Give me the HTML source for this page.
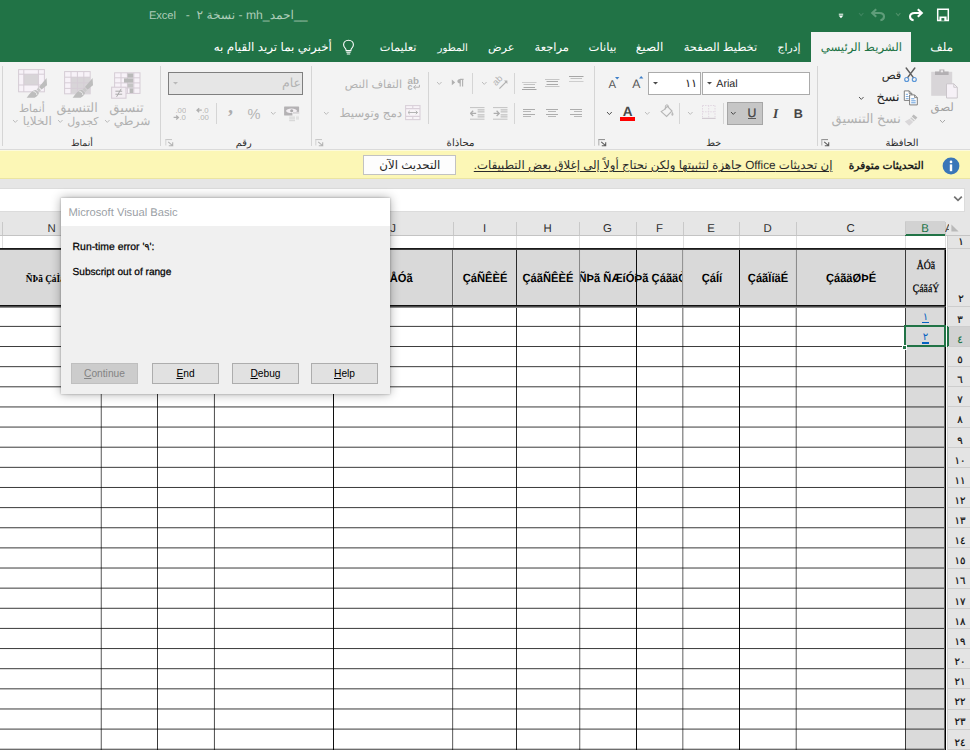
<!DOCTYPE html>
<html lang="ar">
<head>
<meta charset="utf-8">
<title>Excel</title>
<style>
*{box-sizing:border-box;margin:0;padding:0}
html,body{width:970px;height:750px;overflow:hidden;background:#e6e6e6}
body{font-family:"Liberation Sans",sans-serif;font-size:12px;color:#262626;position:relative}
.abs,.t,.ic,.vs{position:absolute}
.t{white-space:nowrap;line-height:1;text-rendering:geometricPrecision}
.r{direction:rtl}
/* title + tabs */
#titlebar{position:absolute;left:0;top:0;width:970px;height:62px;background:#217346}
#title{left:149px;top:7px;font-size:12.2px;color:#aecdb9;direction:ltr;line-height:16px}
.tab{color:#fff;font-size:11.5px;top:39px;line-height:16px;direction:rtl}
#acttab{position:absolute;left:811px;top:32px;width:100px;height:31px;background:#f3f3f3}
/* ribbon */
#ribbon{position:absolute;left:0;top:62px;width:970px;height:88px;background:#f3f3f3;border-bottom:1px solid #dadada}
.vs{width:1px;background:#d5d5d5}
.gl{font-size:10.5px;color:#3a3a3a;top:137px;line-height:12px;direction:rtl}
.rl{font-size:11.5px;color:#262626;direction:rtl;line-height:14px}
.dim{color:#b3b3b3}
.box{position:absolute;background:#fff;border:1px solid #ababab}
/* message bar */
#msg{position:absolute;left:0;top:150px;width:970px;height:29px;background:#fcf7b6;border-top:1px solid #fdfbdc;border-bottom:1px solid #ebe5a2}
/* formula bar */
#fbar{position:absolute;left:0;top:188px;width:965px;height:24px;background:#fff;border:1px solid #dcdcdc;border-left:0}
/* sheet */
#sheet{position:absolute;left:0;top:220px;width:970px;height:530px;background:#fff;overflow:hidden}
.ch{position:absolute;top:0;height:15px;background:#e6e6e6;border-left:1px solid #c9c9c9;font-size:11.5px;color:#3b3b3b;text-align:center;line-height:16px}
.hc{position:absolute;top:29px;height:56px;background:#d9d9d9;font-weight:bold;font-size:11.5px;color:#000;text-align:center;line-height:56px;overflow:hidden;white-space:nowrap;display:flex;justify-content:center}
.hl,.vl{position:absolute;background:#000}
.rn{position:absolute;left:947px;width:23px;height:20px;font-family:"Liberation Serif",serif;font-size:11px;color:#1c1c1c;text-align:center;direction:ltr}
/* dialog */
#dlg{position:absolute;left:61px;top:198px;width:329px;height:196px;background:#f0f0f0;box-shadow:0 0 10px rgba(0,0,0,.33),0 0 2px rgba(0,0,0,.3)}
#dlgt{position:absolute;left:0;top:0;width:329px;height:28px;background:#fff}
.btn{position:absolute;top:165px;width:67px;height:21px;background:#e1e1e1;border:1px solid #adadad;font-size:10.2px;text-align:center;line-height:19px;color:#000}
</style>
</head>
<body>
<div id="titlebar"></div>
<div id="acttab"></div>
<div class="t" id="title"><span style="font-size:11.2px;letter-spacing:-0.1px;margin-right:3px">Excel</span> &nbsp;-&nbsp; نسخة ٢ - mh_احمد__</div>

<!-- TABS -->
<div class="t " style="left:791.7px;top:37px;width:300px;text-align:center;line-height:20px;font-size:11.92px;color:#fff;direction:rtl;">ملف</div>
<div class="t " style="left:711.4px;top:38px;width:300px;text-align:center;line-height:20px;font-size:11.66px;color:#217346;direction:rtl;">الشريط الرئيسي</div>
<div class="t " style="left:639.0px;top:38px;width:300px;text-align:center;line-height:20px;font-size:10.80px;color:#fff;direction:rtl;">إدراج</div>
<div class="t " style="left:570.4px;top:38px;width:300px;text-align:center;line-height:20px;font-size:11.48px;color:#fff;direction:rtl;">تخطيط الصفحة</div>
<div class="t " style="left:499.6px;top:37px;width:300px;text-align:center;line-height:20px;font-size:12.02px;color:#fff;direction:rtl;">الصيغ</div>
<div class="t " style="left:452.5px;top:38px;width:300px;text-align:center;line-height:20px;font-size:11.60px;color:#fff;direction:rtl;">بيانات</div>
<div class="t " style="left:401.8px;top:38px;width:300px;text-align:center;line-height:20px;font-size:11.48px;color:#fff;direction:rtl;">مراجعة</div>
<div class="t " style="left:351.2px;top:38px;width:300px;text-align:center;line-height:20px;font-size:11.28px;color:#fff;direction:rtl;">عرض</div>
<div class="t " style="left:302.7px;top:39px;width:300px;text-align:center;line-height:20px;font-size:10.17px;color:#fff;direction:rtl;">المطور</div>
<div class="t " style="left:248.1px;top:38px;width:300px;text-align:center;line-height:20px;font-size:11.34px;color:#fff;direction:rtl;">تعليمات</div>
<div class="t " style="left:122.8px;top:37px;width:300px;text-align:center;line-height:20px;font-size:11.95px;color:#fff;direction:rtl;">أخبرني بما تريد القيام به</div>
<svg class="ic" style="left:341px;top:39px;" width="15" height="17" viewBox="0 0 15 17"><path d="M7.5 1.2 C4.4 1.2 2.6 3.4 2.6 5.7 C2.6 7.6 3.8 8.6 4.6 9.8 C5 10.4 5.1 11 5.1 11.6 H9.9 C9.9 11 10 10.4 10.4 9.8 C11.2 8.6 12.4 7.6 12.4 5.7 C12.4 3.4 10.6 1.2 7.5 1.2 Z" fill="none" stroke="#fff" stroke-width="1.1"/><path d="M5.3 13.2 H9.7 M5.8 15 H9.2" stroke="#fff" stroke-width="1.1" fill="none"/></svg>
<svg class="ic" style="left:936px;top:8px;" width="14" height="14" viewBox="0 0 14 14"><path d="M1.7 1.2 H12.3 V12.6 H1.7 Z" fill="none" stroke="#fff" stroke-width="1.5"/><rect x="3.4" y="8.5" width="7.2" height="4" fill="#fff"/><rect x="5.4" y="10.1" width="2.9" height="2.6" fill="#217346"/></svg>
<svg class="ic" style="left:908px;top:8px;" width="16" height="14" viewBox="0 0 16 14"><path d="M13 5 H6.6 C3.6 5 2 6.6 2 8.6 C2 10.6 3.4 12 5.6 12.2" fill="none" stroke="#fff" stroke-width="2.1"/><path d="M9.8 1.2 L13.8 5 L9.8 8.8" fill="none" stroke="#fff" stroke-width="2.1"/></svg>
<svg class="ic" style="left:870px;top:8px;" width="16" height="14" viewBox="0 0 16 14"><path d="M3 5 H9.4 C12.4 5 14 6.6 14 8.6 C14 10.6 12.6 12 10.4 12.2" fill="none" stroke="#5f9d7a" stroke-width="2.1"/><path d="M6.2 1.2 L2.2 5 L6.2 8.8" fill="none" stroke="#5f9d7a" stroke-width="2.1"/></svg>
<svg class="ic" style="left:894.8px;top:12.0px;" width="6.4" height="4.6" viewBox="0 0 6.4 4.6"><path d="M1 1 L3.2 3.6 L5.4 1" fill="none" stroke="#4f9069" stroke-width="1.1"/></svg>
<svg class="ic" style="left:857.5px;top:12.0px;" width="6.4" height="4.6" viewBox="0 0 6.4 4.6"><path d="M1 1 L3.2 3.6 L5.4 1" fill="none" stroke="#3f8560" stroke-width="1.1"/></svg>
<svg class="ic" style="left:838px;top:13px;" width="6" height="6" viewBox="0 0 6 6"><rect x="0.8" y="0.7" width="4.4" height="1" fill="#fff"/><path d="M0.6 2.6 H5.4 L3 5.2 Z" fill="#fff"/></svg>

<!-- RIBBON -->
<div id="ribbon"></div>
<div class="vs" style="left:2px;top:66px;height:80px"></div>
<div class="vs" style="left:160px;top:66px;height:80px"></div>
<div class="vs" style="left:311px;top:66px;height:80px"></div>
<div class="vs" style="left:594px;top:66px;height:80px"></div>
<div class="vs" style="left:817px;top:66px;height:80px"></div>
<svg class="ic" style="left:930px;top:68px;" width="29" height="32" viewBox="0 0 29 32"><rect x="1.2" y="3.8" width="21" height="24" fill="#d8d5d8"/><path d="M5 7 V3.6 H9.4 V1.4 H14.4 V3.6 H18.6 V7 Z" fill="#b3b0b3"/><rect x="10.7" y="2.3" width="2.4" height="2" fill="#ece9ec"/><path d="M16.5 15.8 H23.8 L27.3 19.3 V30 H16.5 Z" fill="#f6f1f7" stroke="#cbc6cb" stroke-width="1"/><path d="M23.8 15.8 V19.3 H27.3" fill="none" stroke="#cbc6cb" stroke-width="0.9"/></svg>
<div class="t " style="left:792.2px;top:98px;width:300px;text-align:center;line-height:20px;font-size:11.67px;color:#a2a2a2;direction:rtl;">لصق</div>
<svg class="ic" style="left:938.5px;top:118.9px;" width="7" height="4.6" viewBox="0 0 7 4.6"><path d="M1 1 L3.5 3.6 L6 1" fill="none" stroke="#a8a8a8" stroke-width="1"/></svg>
<svg class="ic" style="left:903px;top:67px;" width="15" height="16" viewBox="0 0 15 16"><path d="M3.2 1 L10.4 10.6 M11.8 1 L4.6 10.6" stroke="#5e5e5e" stroke-width="1.45" fill="none" stroke-linecap="round"/><circle cx="3.7" cy="12.5" r="2" fill="none" stroke="#5b97d8" stroke-width="1.15"/><circle cx="11.3" cy="12.5" r="2" fill="none" stroke="#5b97d8" stroke-width="1.15"/></svg>
<div class="t " style="left:741.5px;top:66px;width:300px;text-align:center;line-height:20px;font-size:11.57px;color:#262626;direction:rtl;">قص</div>
<svg class="ic" style="left:903px;top:90px;" width="16" height="16" viewBox="0 0 16 16"><path d="M1.3 0.9 H6.2 L8.8 3.5 V10.4 H1.3 Z" fill="#fff" stroke="#787878" stroke-width="0.95"/><path d="M6.2 0.9 V3.5 H8.8" fill="none" stroke="#787878" stroke-width="0.85"/><path d="M2.8 4.3 H5 M2.8 6.5 H5.6 M2.8 8.6 H5.6" stroke="#5b97d8" stroke-width="0.8"/><path d="M6.6 4.9 H11.6 L14.3 7.6 V14.9 H6.6 Z" fill="#fff" stroke="#787878" stroke-width="0.95"/><path d="M11.6 4.9 V7.6 H14.3" fill="none" stroke="#787878" stroke-width="0.85"/><path d="M8.2 8.8 H11.4 M8.2 10.8 H12.7 M8.2 12.8 H12.7" stroke="#5b97d8" stroke-width="0.95"/></svg>
<div class="t " style="left:738.0px;top:87px;width:300px;text-align:center;line-height:20px;font-size:12.60px;color:#262626;direction:rtl;">نسخ</div>
<svg class="ic" style="left:858.2px;top:96.2px;" width="6.6" height="4.4" viewBox="0 0 6.6 4.4"><path d="M1 1 L3.3 3.4 L5.6 1" fill="none" stroke="#555" stroke-width="1"/></svg>
<svg class="ic" style="left:904px;top:113px;" width="15" height="14" viewBox="0 0 15 14"><path d="M9.6 1.6 L13.4 4.6 L11.4 6.8 L7.8 3.6 Z" fill="#bcbcbc"/><path d="M7.2 4.2 L10.8 7.4 L9.8 8.4 L6.2 5.2 Z" fill="#cbcbcb"/><path d="M5.6 5.8 L9.2 9 L5.2 12.8 L0.8 8.6 Z" fill="#d9d7d9"/></svg>
<div class="t " style="left:716.2px;top:109px;width:300px;text-align:center;line-height:20px;font-size:13.06px;color:#b1b1b1;direction:rtl;">نسخ التنسيق</div>
<div class="t " style="left:752.0px;top:134px;width:300px;text-align:center;line-height:20px;font-size:9.81px;color:#2b2b2b;direction:rtl;">الحافظة</div>
<svg class="ic" style="left:821px;top:139px;" width="9" height="8" viewBox="0 0 9 8"><path d="M0.3 0.6 H7" stroke="#8c8c8c" stroke-width="1" fill="none"/><path d="M0.8 0.6 V6.6" stroke="#b6b6b6" stroke-width="1.2" fill="none"/><path d="M3.2 2.8 L7.3 6.3 M7.7 3.2 V6.7 H3.8" stroke="#5e5e5e" stroke-width="1.1" fill="none"/></svg>
<div class="box" style="left:702px;top:72px;width:108px;height:23px"></div>
<div class="box" style="left:648px;top:72px;width:53px;height:23px"></div>
<div class="t " style="left:577.0px;top:74px;width:300px;text-align:center;line-height:20px;font-size:10.69px;color:#262626;direction:ltr;">Arial</div>
<svg class="ic" style="left:706.5px;top:82.3px;" width="5" height="2.6" viewBox="0 0 5 2.6"><path d="M0 0 H5 L2.5 2.6 Z" fill="#4a4a4a"/></svg>
<div class="t " style="left:541.1px;top:74px;width:300px;text-align:center;line-height:20px;font-size:11.50px;color:#262626;direction:rtl;">١١</div>
<svg class="ic" style="left:652.9px;top:82.3px;" width="5" height="2.6" viewBox="0 0 5 2.6"><path d="M0 0 H5 L2.5 2.6 Z" fill="#4a4a4a"/></svg>
<div class="t " style="left:486.3px;top:74px;width:300px;text-align:center;line-height:20px;font-size:12.20px;color:#595959;direction:ltr;">A</div>
<svg class="ic" style="left:638.6px;top:75.8px;" width="5" height="3" viewBox="0 0 5 3"><path d="M0 2.6 L2.2 0 L4.4 2.6 Z" fill="#3f7fc8"/></svg>
<div class="t " style="left:462.3px;top:75px;width:300px;text-align:center;line-height:20px;font-size:11.30px;color:#595959;direction:ltr;">A</div>
<svg class="ic" style="left:614.6px;top:76.6px;" width="5" height="3" viewBox="0 0 5 3"><path d="M0 0 H4.4 L2.2 2.6 Z" fill="#3f7fc8"/></svg>
<div class="t " style="left:648.3px;top:104px;width:300px;text-align:center;line-height:20px;font-size:12.60px;color:#454545;font-weight:bold;direction:ltr;">B</div>
<div class="t " style="left:625.5px;top:104px;width:300px;text-align:center;line-height:20px;font-size:13.40px;color:#454545;font-weight:bold;direction:ltr;font-family:'Liberation Serif',serif;font-style:italic;">I</div>
<div class="abs" style="left:727px;top:102px;width:36px;height:23px;background:#c6c6c6;border:1px solid #a6a6a6"></div>
<div class="t " style="left:601.8px;top:103px;width:300px;text-align:center;line-height:20px;font-size:12.20px;color:#454545;direction:ltr;-webkit-text-stroke:0.3px #454545;">U</div>
<div class="abs" style="left:747.5px;top:118.2px;width:8.6px;height:1.1px;background:#5a5a5a"></div>
<svg class="ic" style="left:730.3000000000001px;top:111.39999999999999px;" width="6.6" height="4.4" viewBox="0 0 6.6 4.4"><path d="M1 1 L3.3 3.4 L5.6 1" fill="none" stroke="#4a4a4a" stroke-width="1"/></svg>
<div class="vs" style="left:723px;top:103px;height:21px"></div>
<svg class="ic" style="left:702px;top:105px;" width="14" height="15" viewBox="0 0 14 15"><path d="M0.5 0.5 H13 M0.5 6.8 H13 M0.5 0.5 V13 M6.7 0.5 V13 M13 0.5 V13" stroke="#e0d5e0" stroke-width="1" stroke-dasharray="1.4 1.2" fill="none"/><path d="M0 13.4 H13.6" stroke="#d2cbd2" stroke-width="1.2"/></svg>
<svg class="ic" style="left:687.0px;top:111.39999999999999px;" width="6.6" height="4.4" viewBox="0 0 6.6 4.4"><path d="M1 1 L3.3 3.4 L5.6 1" fill="none" stroke="#bdbdbd" stroke-width="1"/></svg>
<div class="vs" style="left:679px;top:103px;height:21px"></div>
<svg class="ic" style="left:659px;top:104px;" width="16" height="15" viewBox="0 0 16 15"><path d="M5.2 5.6 L8.4 2.4 L13 7 L7.6 12.4 L2.2 7.6 Z" fill="none" stroke="#b5b5b5" stroke-width="1.1"/><path d="M6.4 5.4 V2.2 C6.4 0.4 9.4 0.4 9.4 2.2 V3.4" fill="none" stroke="#b5b5b5" stroke-width="1"/><path d="M13.2 7.4 C14.6 9.4 14.8 10.6 14 11.4 C13.2 12 12.2 11.4 12.4 10.2 Z" fill="#b9b9b9"/></svg>
<svg class="ic" style="left:643.5px;top:111.39999999999999px;" width="6.6" height="4.4" viewBox="0 0 6.6 4.4"><path d="M1 1 L3.3 3.4 L5.6 1" fill="none" stroke="#bdbdbd" stroke-width="1"/></svg>
<div class="t " style="left:477.6px;top:102px;width:300px;text-align:center;line-height:20px;font-size:13.60px;color:#484848;font-weight:bold;direction:ltr;">A</div>
<div class="abs" style="left:619.8px;top:117px;width:15.4px;height:3.7px;background:#ff0000"></div>
<svg class="ic" style="left:605.6px;top:111.3px;" width="6.8" height="4.6" viewBox="0 0 6.8 4.6"><path d="M1 1 L3.4 3.6 L5.8 1" fill="none" stroke="#505050" stroke-width="1.0"/></svg>
<div class="t " style="left:563.8px;top:134px;width:300px;text-align:center;line-height:20px;font-size:9.50px;color:#2b2b2b;direction:rtl;">خط</div>
<svg class="ic" style="left:598px;top:139px;" width="9" height="8" viewBox="0 0 9 8"><path d="M0.3 0.6 H7" stroke="#8c8c8c" stroke-width="1" fill="none"/><path d="M0.8 0.6 V6.6" stroke="#b6b6b6" stroke-width="1.2" fill="none"/><path d="M3.2 2.8 L7.3 6.3 M7.7 3.2 V6.7 H3.8" stroke="#5e5e5e" stroke-width="1.1" fill="none"/></svg>
<svg class="ic" style="left:568.5px;top:76px;" width="15" height="7" viewBox="0 0 15 7"><path d="M0 0.5 H14.5" stroke="#a6a6a6" stroke-width="1"/><path d="M1.5 2.5 H13" stroke="#c2c2c2" stroke-width="1"/><path d="M0 5.5 H14.5" stroke="#cdcdcd" stroke-width="1"/></svg>
<svg class="ic" style="left:545px;top:79px;" width="15" height="9" viewBox="0 0 15 9"><path d="M0 0.5 H14.5" stroke="#c6c6c6" stroke-width="1"/><path d="M1.5 2.5 H13" stroke="#aaaaaa" stroke-width="1"/><path d="M1.5 5.5 H13" stroke="#aaaaaa" stroke-width="1"/><path d="M0 7.5 H14.5" stroke="#c6c6c6" stroke-width="1"/></svg>
<svg class="ic" style="left:522px;top:82px;" width="15" height="9" viewBox="0 0 15 9"><path d="M0 0.5 H14.5" stroke="#cdcdcd" stroke-width="1"/><path d="M1.5 2.5 H13" stroke="#c2c2c2" stroke-width="1"/><path d="M1.5 5.5 H13" stroke="#aaaaaa" stroke-width="1"/><path d="M0 7.5 H14.5" stroke="#a6a6a6" stroke-width="1"/></svg>
<div class="vs" style="left:514px;top:73px;height:21px"></div>
<svg class="ic" style="left:492px;top:75px;" width="17" height="15" viewBox="0 0 17 15"><text x="0" y="0" transform="translate(4,11.2) rotate(-45)" font-family="Liberation Sans,sans-serif" font-size="9.2" fill="#b1b1b1">ab</text><path d="M7.4 13.6 L14.6 6.4" stroke="#b1b1b1" stroke-width="1.2" fill="none"/><path d="M12 5.6 L15.4 5.6 L15.4 9 Z" fill="#b1b1b1"/></svg>
<svg class="ic" style="left:481.0px;top:81.1px;" width="6.6" height="4.4" viewBox="0 0 6.6 4.4"><path d="M1 1 L3.3 3.4 L5.6 1" fill="none" stroke="#bdbdbd" stroke-width="1"/></svg>
<div class="vs" style="left:472px;top:73px;height:21px"></div>
<svg class="ic" style="left:451px;top:78px;" width="14" height="10" viewBox="0 0 14 10"><path d="M0.8 1.6 L4.2 4.4 L0.8 7.2 Z" fill="#b0b0b0"/><path d="M9 1.4 H12.6 M9.2 1.4 V8.6 M11.6 1.4 V8.6" stroke="#b0b0b0" stroke-width="1.1" fill="none"/><path d="M9.2 1 C5.4 1 5.4 5.4 9.2 5.4 Z" fill="#b0b0b0"/></svg>
<svg class="ic" style="left:436.2px;top:81.1px;" width="6.6" height="4.4" viewBox="0 0 6.6 4.4"><path d="M1 1 L3.3 3.4 L5.6 1" fill="none" stroke="#bdbdbd" stroke-width="1"/></svg>
<div class="vs" style="left:428px;top:72px;height:52px"></div>
<svg class="ic" style="left:406.5px;top:76.5px;" width="14" height="14" viewBox="0 0 14 14"><text x="0.6" y="6.8" font-family="Liberation Sans,sans-serif" font-size="8.8" font-weight="bold" fill="#b1b1b1" textLength="11.4" lengthAdjust="spacingAndGlyphs">ab</text><text x="0.6" y="12.6" font-family="Liberation Sans,sans-serif" font-size="8.8" font-weight="bold" fill="#b1b1b1">c</text><path d="M12.4 7.8 V10.2 H6.8 M8.8 8.2 L6.6 10.2 L8.8 12.2" stroke="#b1b1b1" stroke-width="1" fill="none"/></svg>
<div class="t " style="left:223.4px;top:75px;width:300px;text-align:center;line-height:20px;font-size:11.20px;color:#b1b1b1;direction:rtl;">التفاف النص</div>
<svg class="ic" style="left:569.6px;top:109px;" width="13" height="9" viewBox="0 0 13 9"><path d="M0 0.5 H12" stroke="#adadad" stroke-width="1"/><path d="M4 2.5 H12" stroke="#b8b8b8" stroke-width="1"/><path d="M0 5.5 H12" stroke="#adadad" stroke-width="1"/><path d="M4 7.5 H12" stroke="#b8b8b8" stroke-width="1"/></svg>
<svg class="ic" style="left:546px;top:109px;" width="13" height="9" viewBox="0 0 13 9"><path d="M0.0 0.5 H12.0" stroke="#adadad" stroke-width="1"/><path d="M2.0 2.5 H10.0" stroke="#b8b8b8" stroke-width="1"/><path d="M0.0 5.5 H12.0" stroke="#adadad" stroke-width="1"/><path d="M2.0 7.5 H10.0" stroke="#b8b8b8" stroke-width="1"/></svg>
<svg class="ic" style="left:523.2px;top:109px;" width="13" height="9" viewBox="0 0 13 9"><path d="M0 0.5 H12" stroke="#adadad" stroke-width="1"/><path d="M0 2.5 H8" stroke="#b8b8b8" stroke-width="1"/><path d="M0 5.5 H12" stroke="#adadad" stroke-width="1"/><path d="M0 7.5 H8" stroke="#b8b8b8" stroke-width="1"/></svg>
<div class="vs" style="left:514px;top:103px;height:21px"></div>
<svg class="ic" style="left:493.2px;top:106.6px;" width="15" height="14" viewBox="0 0 15 14"><path d="M0 0.6 H14.5 M0 12.2 H14.5" stroke="#bcbcbc" stroke-width="0.9"/><path d="M7.6 2.9 H14.5 M7.6 4.9 H14.5 M7.6 7.9 H14.5 M7.6 9.9 H14.5" stroke="#b6b6b6" stroke-width="1"/><path d="M0.6 6.4 H6 M3.6 3.8 L6.2 6.4 L3.6 9" stroke="#adadad" stroke-width="1.3" fill="none"/></svg>
<svg class="ic" style="left:469.6px;top:106.6px;" width="15" height="14" viewBox="0 0 15 14"><path d="M0 0.6 H14.5 M0 12.2 H14.5" stroke="#bcbcbc" stroke-width="0.9"/><path d="M7.6 2.9 H14.5 M7.6 4.9 H14.5 M7.6 7.9 H14.5 M7.6 9.9 H14.5" stroke="#b6b6b6" stroke-width="1"/><path d="M6.2 6.4 H0.8 M3.2 3.8 L0.6 6.4 L3.2 9" stroke="#adadad" stroke-width="1.3" fill="none"/></svg>
<svg class="ic" style="left:405px;top:105px;" width="16" height="16" viewBox="0 0 16 16"><rect x="0.6" y="0.6" width="14.4" height="14" fill="#f8f4f8" stroke="#d9d0d9" stroke-width="1.1"/><path d="M0.6 3.6 H15 M0.6 11.4 H15 M7.8 0.6 V3.6 M7.8 11.4 V14.6" stroke="#d9d0d9" stroke-width="1.1"/><path d="M3 7.5 H12.6 M4.8 5.8 L3 7.5 L4.8 9.2 M10.8 5.8 L12.6 7.5 L10.8 9.2" stroke="#b4b4b4" stroke-width="1" fill="none"/></svg>
<div class="t " style="left:220.8px;top:103px;width:300px;text-align:center;line-height:20px;font-size:11.90px;color:#b1b1b1;direction:rtl;">دمج وتوسيط</div>
<svg class="ic" style="left:322.9px;top:111.2px;" width="6.6" height="4.4" viewBox="0 0 6.6 4.4"><path d="M1 1 L3.3 3.4 L5.6 1" fill="none" stroke="#bdbdbd" stroke-width="1"/></svg>
<div class="t " style="left:310.5px;top:134px;width:300px;text-align:center;line-height:20px;font-size:10.18px;color:#2b2b2b;direction:rtl;">محاذاة</div>
<svg class="ic" style="left:314.5px;top:139px;" width="9" height="8" viewBox="0 0 9 8"><path d="M0.3 0.6 H7" stroke="#c4c4c4" stroke-width="1" fill="none"/><path d="M0.8 0.6 V6.6" stroke="#d6d6d6" stroke-width="1.2" fill="none"/><path d="M3.2 2.8 L7.3 6.3 M7.7 3.2 V6.7 H3.8" stroke="#b4b4b4" stroke-width="1.1" fill="none"/></svg>
<div class="box" style="left:168px;top:72px;width:135px;height:23px;background:#e6e6e6;border-color:#7f7f7f"></div>
<div class="t " style="left:141.5px;top:73px;width:300px;text-align:center;line-height:20px;font-size:12.58px;color:#b3b3b3;direction:rtl;">عام</div>
<svg class="ic" style="left:172.5px;top:82.3px;" width="5" height="2.6" viewBox="0 0 5 2.6"><path d="M0 0 H5 L2.5 2.6 Z" fill="#b9b9b9"/></svg>
<svg class="ic" style="left:284px;top:105.5px;" width="16" height="16" viewBox="0 0 16 16"><rect x="0.1" y="0.5" width="15" height="9" rx="0.6" fill="#b4b2b4"/><ellipse cx="7.5" cy="4.8" rx="5.4" ry="2.3" fill="#f2eef2"/><circle cx="7.7" cy="4.8" r="1.55" fill="#aaa8aa"/><rect x="8.4" y="5.9" width="7.2" height="4" fill="#f3f3f3"/><path d="M9 6.9 H15.2" stroke="#d3d0d3" stroke-width="1.5"/><path d="M5.2 11.1 H11 M5.2 12.9 H11 M5.2 14.7 H11" stroke="#d9d9d9" stroke-width="1.2"/><path d="M12 11.1 H15 M12 12.8 H15" stroke="#dcdcdc" stroke-width="1.2"/></svg>
<svg class="ic" style="left:270.09999999999997px;top:111.0px;" width="6.6" height="4.4" viewBox="0 0 6.6 4.4"><path d="M1 1 L3.3 3.4 L5.6 1" fill="none" stroke="#bdbdbd" stroke-width="1"/></svg>
<div class="t " style="left:104.0px;top:105px;width:300px;text-align:center;line-height:20px;font-size:14.60px;color:#b3b3b3;direction:ltr;">%</div>
<div class="t " style="left:80.5px;top:97px;width:300px;text-align:center;line-height:20px;font-size:20.00px;color:#adadad;font-weight:bold;direction:ltr;font-family:'Liberation Serif',serif;">,</div>
<div class="vs" style="left:216px;top:103px;height:21px"></div>
<svg class="ic" style="left:196px;top:106.6px;" width="13" height="14" viewBox="0 0 13 14"><text x="6.2" y="6.2" font-family="Liberation Sans,sans-serif" font-size="7.8" fill="#b6b6b6">.0</text><text x="2" y="13.2" font-family="Liberation Sans,sans-serif" font-size="7.8" fill="#b6b6b6">.00</text><path d="M5.8 3.2 H1.2 M3.2 1.2 L1 3.2 L3.2 5.2" stroke="#b0b0b0" stroke-width="1.3" fill="none"/></svg>
<svg class="ic" style="left:172.6px;top:106.6px;" width="13" height="14" viewBox="0 0 13 14"><text x="2.4" y="6.2" font-family="Liberation Sans,sans-serif" font-size="7.8" fill="#b6b6b6">.00</text><text x="6.4" y="13.2" font-family="Liberation Sans,sans-serif" font-size="7.8" fill="#b6b6b6">.0</text><path d="M0.6 10.4 H5.2 M3.2 8.4 L5.4 10.4 L3.2 12.4" stroke="#b0b0b0" stroke-width="1.3" fill="none"/></svg>
<div class="t " style="left:93.7px;top:134px;width:300px;text-align:center;line-height:20px;font-size:9.78px;color:#2b2b2b;direction:rtl;">رقم</div>
<svg class="ic" style="left:164.5px;top:139px;" width="9" height="8" viewBox="0 0 9 8"><path d="M0.3 0.6 H7" stroke="#c4c4c4" stroke-width="1" fill="none"/><path d="M0.8 0.6 V6.6" stroke="#d6d6d6" stroke-width="1.2" fill="none"/><path d="M3.2 2.8 L7.3 6.3 M7.7 3.2 V6.7 H3.8" stroke="#b4b4b4" stroke-width="1.1" fill="none"/></svg>
<svg class="ic" style="left:111px;top:72px;" width="30" height="27" viewBox="0 0 30 27"><rect x="3.6" y="0.8" width="25.4" height="20.6" fill="#f7f2f8" stroke="#d6cdd6" stroke-width="1"/><path d="M3.6 5.8 H29 M3.6 10.9 H29 M3.6 16 H29 M10 0.8 V21.4 M16.4 0.8 V21.4 M22.8 0.8 V21.4" stroke="#d6cdd6" stroke-width="1"/><rect x="16.6" y="1.4" width="5.6" height="4.2" fill="#b9b9b9"/><rect x="13" y="6.4" width="9.2" height="4.2" fill="#b9b9b9"/><rect x="16.6" y="11.4" width="5.6" height="4.2" fill="#c4c4c4"/><rect x="18.6" y="16.4" width="3.6" height="4.6" fill="#b9b9b9"/><rect x="0.6" y="15.2" width="14.4" height="11" fill="#f3eef3" stroke="#d6cdd6" stroke-width="1.1"/><path d="M4.4 19.2 H11.2 M4.4 22.2 H11.2 M10.2 16.8 L5.6 24.8" stroke="#a9a9a9" stroke-width="1" fill="none"/></svg>
<div class="t " style="left:-23.5px;top:98px;width:300px;text-align:center;line-height:20px;font-size:13.19px;color:#b1b1b1;direction:rtl;">تنسيق</div>
<div class="t " style="left:-18.0px;top:111px;width:300px;text-align:center;line-height:20px;font-size:12.18px;color:#b1b1b1;direction:rtl;">شرطي</div>
<svg class="ic" style="left:103.7px;top:119.0px;" width="6.6" height="4.4" viewBox="0 0 6.6 4.4"><path d="M1 1 L3.3 3.4 L5.6 1" fill="none" stroke="#bdbdbd" stroke-width="1"/></svg>
<svg class="ic" style="left:63.5px;top:70.6px;" width="27" height="24" viewBox="0 0 27 24"><rect x="0.6" y="0.6" width="25.6" height="22.2" fill="#f7f2f8" stroke="#d6cdd6" stroke-width="1"/><rect x="7" y="6.2" width="19" height="16.4" fill="#d8d5d8"/><path d="M0.6 6.2 H26.2 M0.6 11.8 H26.2 M0.6 17.4 H26.2 M7 0.6 V22.8 M13.4 0.6 V22.8 M19.8 0.6 V22.8" stroke="#d6cdd6" stroke-width="1"/></svg>
<svg class="ic" style="left:71.6px;top:77px;" width="22" height="22" viewBox="0 0 22 22"><path d="M20.6 1 L21 8.2 L15.6 12.6 L13 10 Z" fill="#bdbdbd"/><path d="M12.4 10.6 L15 13.2 L13.2 15 L10.6 12.4 Z" fill="#c9c9c9"/><path d="M10 13 C6 13.4 3.6 17 0.6 20.8 H8.6 C11.6 19.4 13.2 17 12.8 15.6 Z" fill="#bdbdbd"/><path d="M7.4 14.6 C9.4 14.4 11 16 10.8 18" stroke="#f3f3f3" stroke-width="0.9" fill="none"/></svg>
<div class="t " style="left:-72.8px;top:98px;width:300px;text-align:center;line-height:20px;font-size:12.86px;color:#b1b1b1;direction:rtl;">التنسيق</div>
<div class="t " style="left:-67.2px;top:112px;width:300px;text-align:center;line-height:20px;font-size:10.99px;color:#b1b1b1;direction:rtl;">كجدول</div>
<svg class="ic" style="left:56.7px;top:119.0px;" width="6.6" height="4.4" viewBox="0 0 6.6 4.4"><path d="M1 1 L3.3 3.4 L5.6 1" fill="none" stroke="#bdbdbd" stroke-width="1"/></svg>
<svg class="ic" style="left:17.5px;top:68.5px;" width="27" height="24" viewBox="0 0 27 24"><rect x="0.6" y="0.6" width="25.8" height="22.2" fill="#f7f2f8" stroke="#d6cdd6" stroke-width="1"/><rect x="5.8" y="5.2" width="14.6" height="10.8" fill="#d8d5d8"/><path d="M0.6 5.2 H26.4 M0.6 16 H26.4 M5.8 0.6 V22.8 M20.4 0.6 V22.8" stroke="#d6cdd6" stroke-width="1"/></svg>
<svg class="ic" style="left:26px;top:77px;" width="22" height="22" viewBox="0 0 22 22"><path d="M20.6 1 L21 8.2 L15.6 12.6 L13 10 Z" fill="#bdbdbd"/><path d="M12.4 10.6 L15 13.2 L13.2 15 L10.6 12.4 Z" fill="#c9c9c9"/><path d="M10 13 C6 13.4 3.6 17 0.6 20.8 H8.6 C11.6 19.4 13.2 17 12.8 15.6 Z" fill="#bdbdbd"/><path d="M7.4 14.6 C9.4 14.4 11 16 10.8 18" stroke="#f3f3f3" stroke-width="0.9" fill="none"/></svg>
<div class="t " style="left:-118.2px;top:99px;width:300px;text-align:center;line-height:20px;font-size:10.94px;color:#b1b1b1;direction:rtl;">أنماط</div>
<div class="t " style="left:-112.7px;top:111px;width:300px;text-align:center;line-height:20px;font-size:12.01px;color:#b1b1b1;direction:rtl;">الخلايا</div>
<svg class="ic" style="left:12.399999999999999px;top:119.0px;" width="6.6" height="4.4" viewBox="0 0 6.6 4.4"><path d="M1 1 L3.3 3.4 L5.6 1" fill="none" stroke="#bdbdbd" stroke-width="1"/></svg>
<div class="t " style="left:-68.1px;top:133px;width:300px;text-align:center;line-height:20px;font-size:9.22px;color:#2b2b2b;direction:rtl;">أنماط</div>

<!-- MESSAGE BAR -->
<div id="msg"></div>

<!-- FORMULA BAR -->
<div id="fbar"></div>

<!-- SHEET -->
<svg class="ic" style="left:942px;top:156.5px;" width="18" height="18" viewBox="0 0 18 18"><circle cx="9" cy="9" r="8.4" fill="#3a76b8"/><circle cx="9" cy="4.9" r="1.35" fill="#fff"/><rect x="7.8" y="7.4" width="2.4" height="6.8" fill="#fff"/></svg>
<div class="t " style="left:736.2px;top:156px;width:300px;text-align:center;line-height:20px;font-size:10.60px;color:#1e1e1e;font-weight:bold;direction:rtl;">التحديثات متوفرة</div>
<div class="t " style="left:303.1px;top:156px;width:700px;text-align:center;line-height:20px;font-size:11.74px;color:#2a2a2a;direction:rtl;text-decoration:underline;text-underline-offset:2px;text-decoration-thickness:1px;">إن تحديثات Office جاهزة لتثبيتها ولكن نحتاج أولاً إلى إغلاق بعض التطبيقات.</div>
<div class="abs" style="left:363px;top:155px;width:93px;height:20px;background:#fdfdfd;border:1px solid #c2c2c2"></div>
<div class="t " style="left:259.8px;top:155px;width:300px;text-align:center;line-height:20px;font-size:11.82px;color:#262626;direction:rtl;">التحديث الآن</div>
<svg class="ic" style="left:952.5px;top:195px;" width="10" height="8" viewBox="0 0 10 8"><path d="M1.2 1.6 L5 5.4 L8.8 1.6" fill="none" stroke="#727272" stroke-width="1.7"/></svg>
<div class="abs" style="left:0;top:220px;width:970px;height:16px;background:#e6e6e6;border-bottom:1px solid #c4c4c4"></div>
<div class="abs" style="left:905px;top:221px;width:40px;height:15px;background:#d2d2d2;border-bottom:2px solid #217346"></div>
<div class="abs" style="left:2px;top:222px;width:1px;height:13px;background:#c9c9c9"></div>
<div class="t " style="left:-98.5px;top:219px;width:300px;text-align:center;line-height:20px;font-size:11.40px;color:#303030;direction:ltr;">N</div>
<div class="abs" style="left:101px;top:222px;width:1px;height:13px;background:#c9c9c9"></div>
<div class="t " style="left:-21.0px;top:219px;width:300px;text-align:center;line-height:20px;font-size:11.40px;color:#303030;direction:ltr;">M</div>
<div class="abs" style="left:157px;top:222px;width:1px;height:13px;background:#c9c9c9"></div>
<div class="t " style="left:35.5px;top:219px;width:300px;text-align:center;line-height:20px;font-size:11.40px;color:#303030;direction:ltr;">L</div>
<div class="abs" style="left:214px;top:222px;width:1px;height:13px;background:#c9c9c9"></div>
<div class="t " style="left:123.5px;top:219px;width:300px;text-align:center;line-height:20px;font-size:11.40px;color:#303030;direction:ltr;">K</div>
<div class="abs" style="left:333px;top:222px;width:1px;height:13px;background:#c9c9c9"></div>
<div class="t " style="left:243.0px;top:219px;width:300px;text-align:center;line-height:20px;font-size:11.40px;color:#303030;direction:ltr;">J</div>
<div class="abs" style="left:453px;top:222px;width:1px;height:13px;background:#c9c9c9"></div>
<div class="t " style="left:334.5px;top:219px;width:300px;text-align:center;line-height:20px;font-size:11.40px;color:#303030;direction:ltr;">I</div>
<div class="abs" style="left:516px;top:222px;width:1px;height:13px;background:#c9c9c9"></div>
<div class="t " style="left:397.5px;top:219px;width:300px;text-align:center;line-height:20px;font-size:11.40px;color:#303030;direction:ltr;">H</div>
<div class="abs" style="left:579px;top:222px;width:1px;height:13px;background:#c9c9c9"></div>
<div class="t " style="left:457.5px;top:219px;width:300px;text-align:center;line-height:20px;font-size:11.40px;color:#303030;direction:ltr;">G</div>
<div class="abs" style="left:636px;top:222px;width:1px;height:13px;background:#c9c9c9"></div>
<div class="t " style="left:509.5px;top:219px;width:300px;text-align:center;line-height:20px;font-size:11.40px;color:#303030;direction:ltr;">F</div>
<div class="abs" style="left:683px;top:222px;width:1px;height:13px;background:#c9c9c9"></div>
<div class="t " style="left:561.0px;top:219px;width:300px;text-align:center;line-height:20px;font-size:11.40px;color:#303030;direction:ltr;">E</div>
<div class="abs" style="left:739px;top:222px;width:1px;height:13px;background:#c9c9c9"></div>
<div class="t " style="left:617.5px;top:219px;width:300px;text-align:center;line-height:20px;font-size:11.40px;color:#303030;direction:ltr;">D</div>
<div class="abs" style="left:796px;top:222px;width:1px;height:13px;background:#c9c9c9"></div>
<div class="t " style="left:700.5px;top:219px;width:300px;text-align:center;line-height:20px;font-size:11.40px;color:#303030;direction:ltr;">C</div>
<div class="abs" style="left:905px;top:222px;width:1px;height:13px;background:#c9c9c9"></div>
<div class="t " style="left:775.0px;top:219px;width:300px;text-align:center;line-height:20px;font-size:11.40px;color:#217346;direction:ltr;">B</div>
<div class="abs" style="left:945px;top:222px;width:1px;height:13px;background:#c9c9c9"></div>
<div class="t " style="left:797.0px;top:219px;width:300px;text-align:center;line-height:20px;font-size:11.40px;color:#3c3c3c;direction:ltr;width:4px;left:945px;overflow:hidden;text-align:left;">A</div>
<svg class="ic" style="left:951px;top:224px;" width="8" height="8" viewBox="0 0 8 8"><path d="M0.4 0.4 V7.6 H7.6 Z" fill="#b9b9b9"/></svg>
<div class="abs" style="left:947px;top:236px;width:23px;height:514px;background:#e4e4e4;border-left:1px solid #cfcfcf"></div>
<div class="abs" style="left:947px;top:326.4px;width:23px;height:20.2px;background:#d2d2d2;border-left:2px solid #217346"></div>
<div class="abs" style="left:0;top:249px;width:947px;height:501px;background:#fff"></div>
<div class="abs" style="left:0;top:236px;width:947px;height:13px;background:#fff"></div>
<div class="abs" style="left:2px;top:236px;width:1px;height:12px;background:#dedede"></div>
<div class="abs" style="left:101px;top:236px;width:1px;height:12px;background:#dedede"></div>
<div class="abs" style="left:157px;top:236px;width:1px;height:12px;background:#dedede"></div>
<div class="abs" style="left:214px;top:236px;width:1px;height:12px;background:#dedede"></div>
<div class="abs" style="left:333px;top:236px;width:1px;height:12px;background:#dedede"></div>
<div class="abs" style="left:453px;top:236px;width:1px;height:12px;background:#dedede"></div>
<div class="abs" style="left:516px;top:236px;width:1px;height:12px;background:#dedede"></div>
<div class="abs" style="left:579px;top:236px;width:1px;height:12px;background:#dedede"></div>
<div class="abs" style="left:636px;top:236px;width:1px;height:12px;background:#dedede"></div>
<div class="abs" style="left:683px;top:236px;width:1px;height:12px;background:#dedede"></div>
<div class="abs" style="left:739px;top:236px;width:1px;height:12px;background:#dedede"></div>
<div class="abs" style="left:796px;top:236px;width:1px;height:12px;background:#dedede"></div>
<div class="abs" style="left:905px;top:236px;width:1px;height:12px;background:#dedede"></div>
<div class="abs" style="left:945px;top:236px;width:1px;height:12px;background:#dedede"></div>
<div class="abs" style="left:0;top:249px;width:945px;height:57px;background:#d9d9d9"></div>
<div class="abs" style="left:906px;top:306px;width:38px;height:444px;background:#dadada"></div>
<div class="abs" style="left:797px;top:268px;width:108px;height:20px;overflow:hidden"><div class="t" style="left:-96.0px;top:0;width:300px;text-align:center;line-height:20px;font-size:12.00px;color:#000;direction:ltr;transform:scaleX(0.93);transform-origin:50% 50%;font-weight:bold;">&Ccedil;&aacute;&atilde;&auml;&Oslash;&THORN;&Eacute;</div></div>
<div class="abs" style="left:740px;top:268px;width:56px;height:20px;overflow:hidden"><div class="t" style="left:-122.0px;top:0;width:300px;text-align:center;line-height:20px;font-size:12.00px;color:#000;direction:ltr;transform:scaleX(0.93);transform-origin:50% 50%;font-weight:bold;">&Ccedil;&aacute;&atilde;&Iuml;&iacute;&auml;&Eacute;</div></div>
<div class="abs" style="left:684px;top:268px;width:55px;height:20px;overflow:hidden"><div class="t" style="left:-122.5px;top:0;width:300px;text-align:center;line-height:20px;font-size:12.00px;color:#000;direction:ltr;transform:scaleX(0.93);transform-origin:50% 50%;font-weight:bold;">&Ccedil;&aacute;&Iacute;&iacute;</div></div>
<div class="abs" style="left:637px;top:268px;width:46px;height:20px;overflow:hidden"><div class="t" style="left:-127.0px;top:0;width:300px;text-align:center;line-height:20px;font-size:12.00px;color:#000;direction:ltr;transform:scaleX(0.93);transform-origin:50% 50%;font-weight:bold;">&Ntilde;&THORN;&atilde; &Ccedil;&aacute;&atilde;&auml;&Ograve;&aacute;</div></div>
<div class="abs" style="left:580px;top:268px;width:56px;height:20px;overflow:hidden"><div class="t" style="left:-122.0px;top:0;width:300px;text-align:center;line-height:20px;font-size:12.00px;color:#000;direction:ltr;transform:scaleX(0.93);transform-origin:50% 50%;font-weight:bold;">&Ntilde;&THORN;&atilde; &Ntilde;&AElig;&iacute;&Oacute;&iacute;</div></div>
<div class="abs" style="left:517px;top:268px;width:62px;height:20px;overflow:hidden"><div class="t" style="left:-119.0px;top:0;width:300px;text-align:center;line-height:20px;font-size:12.00px;color:#000;direction:ltr;transform:scaleX(0.93);transform-origin:50% 50%;font-weight:bold;">&Ccedil;&aacute;&atilde;&Ntilde;&Ecirc;&Egrave;&Eacute;</div></div>
<div class="abs" style="left:454px;top:268px;width:62px;height:20px;overflow:hidden"><div class="t" style="left:-119.0px;top:0;width:300px;text-align:center;line-height:20px;font-size:12.00px;color:#000;direction:ltr;transform:scaleX(0.93);transform-origin:50% 50%;font-weight:bold;">&Ccedil;&aacute;&Ntilde;&Ecirc;&Egrave;&Eacute;</div></div>
<div class="abs" style="left:334px;top:268px;width:119px;height:20px;overflow:hidden"><div class="t" style="left:-90.5px;top:0;width:300px;text-align:center;line-height:20px;font-size:12.00px;color:#000;direction:ltr;transform:scaleX(0.93);transform-origin:50% 50%;font-weight:bold;">&Ccedil;&aacute;&Aring;&Oacute;&atilde;</div></div>
<div class="abs" style="left:3px;top:270px;width:98px;height:20px;overflow:hidden"><div class="t" style="left:-101.0px;top:0;width:300px;text-align:center;line-height:20px;font-size:10.60px;color:#000;direction:ltr;transform:scaleX(0.88);transform-origin:50% 50%;font-family:'Liberation Serif',serif;font-weight:bold;">&Ntilde;&THORN;&atilde; &Ccedil;&aacute;&Igrave;&aelig;&Ccedil;&aacute;</div></div>
<div class="abs" style="left:906px;top:256px;width:39px;height:20px;overflow:hidden"><div class="t" style="left:-130.5px;top:0;width:300px;text-align:center;line-height:20px;font-size:11.20px;color:#000;direction:ltr;transform:scaleX(0.87);transform-origin:50% 50%;font-family:'Liberation Serif',serif;-webkit-text-stroke:0.25px #000;">&Aring;&Oacute;&atilde;</div></div>
<div class="abs" style="left:906px;top:279px;width:39px;height:20px;overflow:hidden"><div class="t" style="left:-130.5px;top:0;width:300px;text-align:center;line-height:20px;font-size:11.20px;color:#000;direction:ltr;transform:scaleX(0.87);transform-origin:50% 50%;font-family:'Liberation Serif',serif;-webkit-text-stroke:0.25px #000;">&Ccedil;&aacute;&atilde;&aacute;&Yacute;</div></div>
<div class="t " style="left:775.5px;top:308px;width:300px;text-align:center;line-height:20px;font-size:10.20px;color:#0563c1;direction:rtl;">١</div>
<div class="t " style="left:775.5px;top:328px;width:300px;text-align:center;line-height:20px;font-size:10.20px;color:#0563c1;direction:rtl;">٢</div>
<div class="abs" style="left:922px;top:322.2px;width:7px;height:1.3px;background:#0563c1"></div>
<div class="abs" style="left:922px;top:342.4px;width:7px;height:1.3px;background:#0563c1"></div>
<svg class="ic" style="left:0;top:0" width="970" height="750" viewBox="0 0 970 750"><rect x="101" y="249" width="1" height="501" fill="#808080"/><rect x="100" y="307" width="1" height="443" fill="#d0d0d0" opacity="0.9"/><rect x="100" y="250" width="1" height="55" fill="#d0d0d0" opacity="0.35"/><rect x="157" y="249" width="1" height="501" fill="#3a3a3a"/><rect x="214" y="249" width="1" height="501" fill="#5a5a5a"/><rect x="213" y="307" width="1" height="443" fill="#f0f0f0" opacity="0.9"/><rect x="213" y="250" width="1" height="55" fill="#f0f0f0" opacity="0.35"/><rect x="333" y="249" width="1" height="501" fill="#101010"/><rect x="452" y="249" width="1" height="501" fill="#707070"/><rect x="453" y="307" width="1" height="443" fill="#e4e4e4" opacity="0.9"/><rect x="453" y="250" width="1" height="55" fill="#e4e4e4" opacity="0.35"/><rect x="516" y="249" width="1" height="501" fill="#2a2a2a"/><rect x="579" y="249" width="1" height="501" fill="#888888"/><rect x="580" y="307" width="1" height="443" fill="#d4d4d4" opacity="0.9"/><rect x="580" y="250" width="1" height="55" fill="#d4d4d4" opacity="0.35"/><rect x="636" y="249" width="1" height="501" fill="#0e0e0e"/><rect x="682" y="249" width="1" height="501" fill="#949494"/><rect x="683" y="307" width="1" height="443" fill="#c4c4c4" opacity="0.9"/><rect x="683" y="250" width="1" height="55" fill="#c4c4c4" opacity="0.35"/><rect x="739" y="249" width="1" height="501" fill="#040404"/><rect x="796" y="249" width="1" height="501" fill="#8c8c8c"/><rect x="795" y="307" width="1" height="443" fill="#c8c8c8" opacity="0.9"/><rect x="795" y="250" width="1" height="55" fill="#c8c8c8" opacity="0.35"/><rect x="905" y="249" width="1" height="501" fill="#3a3a3a"/><rect x="944" y="248" width="1" height="502" fill="#6a6a6a"/><rect x="945" y="248" width="1" height="502" fill="#000"/><rect x="0" y="248" width="946" height="1" fill="#1a1a1a"/><rect x="0" y="249" width="946" height="1" fill="#3c3c3c"/><rect x="0" y="305" width="946" height="1" fill="#101010"/><rect x="0" y="306" width="946" height="1" fill="#4a4a4a"/><rect x="0" y="307" width="944" height="1" fill="#8f8f8f"/><path d="M0 326.40 H944" stroke="#000" stroke-width="0.78"/><path d="M0 346.53 H944" stroke="#000" stroke-width="0.78"/><path d="M0 366.67 H944" stroke="#000" stroke-width="0.78"/><path d="M0 386.80 H944" stroke="#000" stroke-width="0.78"/><path d="M0 406.94 H944" stroke="#000" stroke-width="0.78"/><path d="M0 427.07 H944" stroke="#000" stroke-width="0.78"/><path d="M0 447.21 H944" stroke="#000" stroke-width="0.78"/><path d="M0 467.35 H944" stroke="#000" stroke-width="0.78"/><path d="M0 487.48 H944" stroke="#000" stroke-width="0.78"/><path d="M0 507.62 H944" stroke="#000" stroke-width="0.78"/><path d="M0 527.75 H944" stroke="#000" stroke-width="0.78"/><path d="M0 547.88 H944" stroke="#000" stroke-width="0.78"/><path d="M0 568.02 H944" stroke="#000" stroke-width="0.78"/><path d="M0 588.15 H944" stroke="#000" stroke-width="0.78"/><path d="M0 608.29 H944" stroke="#000" stroke-width="0.78"/><path d="M0 628.42 H944" stroke="#000" stroke-width="0.78"/><path d="M0 648.56 H944" stroke="#000" stroke-width="0.78"/><path d="M0 668.69 H944" stroke="#000" stroke-width="0.78"/><path d="M0 688.83 H944" stroke="#000" stroke-width="0.78"/><path d="M0 708.97 H944" stroke="#000" stroke-width="0.78"/><path d="M0 729.10 H944" stroke="#000" stroke-width="0.78"/><path d="M0 749.24 H944" stroke="#000" stroke-width="0.78"/></svg>
<div class="abs" style="left:948px;top:248.1px;width:22px;height:1px;background:#cdcdcd"></div>
<div class="abs" style="left:948px;top:306.4px;width:22px;height:1px;background:#cdcdcd"></div>
<div class="abs" style="left:948px;top:325.9px;width:22px;height:1px;background:#cdcdcd"></div>
<div class="abs" style="left:948px;top:346.0px;width:22px;height:1px;background:#cdcdcd"></div>
<div class="abs" style="left:948px;top:366.2px;width:22px;height:1px;background:#cdcdcd"></div>
<div class="abs" style="left:948px;top:386.3px;width:22px;height:1px;background:#cdcdcd"></div>
<div class="abs" style="left:948px;top:406.4px;width:22px;height:1px;background:#cdcdcd"></div>
<div class="abs" style="left:948px;top:426.6px;width:22px;height:1px;background:#cdcdcd"></div>
<div class="abs" style="left:948px;top:446.7px;width:22px;height:1px;background:#cdcdcd"></div>
<div class="abs" style="left:948px;top:466.8px;width:22px;height:1px;background:#cdcdcd"></div>
<div class="abs" style="left:948px;top:487.0px;width:22px;height:1px;background:#cdcdcd"></div>
<div class="abs" style="left:948px;top:507.1px;width:22px;height:1px;background:#cdcdcd"></div>
<div class="abs" style="left:948px;top:527.2px;width:22px;height:1px;background:#cdcdcd"></div>
<div class="abs" style="left:948px;top:547.4px;width:22px;height:1px;background:#cdcdcd"></div>
<div class="abs" style="left:948px;top:567.5px;width:22px;height:1px;background:#cdcdcd"></div>
<div class="abs" style="left:948px;top:587.7px;width:22px;height:1px;background:#cdcdcd"></div>
<div class="abs" style="left:948px;top:607.8px;width:22px;height:1px;background:#cdcdcd"></div>
<div class="abs" style="left:948px;top:627.9px;width:22px;height:1px;background:#cdcdcd"></div>
<div class="abs" style="left:948px;top:648.1px;width:22px;height:1px;background:#cdcdcd"></div>
<div class="abs" style="left:948px;top:668.2px;width:22px;height:1px;background:#cdcdcd"></div>
<div class="abs" style="left:948px;top:688.3px;width:22px;height:1px;background:#cdcdcd"></div>
<div class="abs" style="left:948px;top:708.5px;width:22px;height:1px;background:#cdcdcd"></div>
<div class="abs" style="left:948px;top:728.6px;width:22px;height:1px;background:#cdcdcd"></div>
<div class="abs" style="left:948px;top:748.7px;width:22px;height:1px;background:#cdcdcd"></div>
<div class="t " style="left:811.0px;top:233px;width:300px;text-align:center;line-height:20px;font-size:10.20px;color:#111;direction:rtl;-webkit-text-stroke:0.22px currentColor;">١</div>
<div class="t " style="left:811.0px;top:290px;width:300px;text-align:center;line-height:20px;font-size:10.20px;color:#111;direction:rtl;-webkit-text-stroke:0.22px currentColor;">٢</div>
<div class="t " style="left:810.0px;top:311px;width:300px;text-align:center;line-height:20px;font-size:10.20px;color:#111;direction:rtl;-webkit-text-stroke:0.22px currentColor;">٣</div>
<div class="t " style="left:810.0px;top:331px;width:300px;text-align:center;line-height:20px;font-size:10.20px;color:#217346;direction:rtl;-webkit-text-stroke:0.22px currentColor;">٤</div>
<div class="t " style="left:810.0px;top:351px;width:300px;text-align:center;line-height:20px;font-size:10.20px;color:#111;direction:rtl;-webkit-text-stroke:0.22px currentColor;">٥</div>
<div class="t " style="left:810.0px;top:371px;width:300px;text-align:center;line-height:20px;font-size:10.20px;color:#111;direction:rtl;-webkit-text-stroke:0.22px currentColor;">٦</div>
<div class="t " style="left:810.0px;top:391px;width:300px;text-align:center;line-height:20px;font-size:10.20px;color:#111;direction:rtl;-webkit-text-stroke:0.22px currentColor;">٧</div>
<div class="t " style="left:810.0px;top:411px;width:300px;text-align:center;line-height:20px;font-size:10.20px;color:#111;direction:rtl;-webkit-text-stroke:0.22px currentColor;">٨</div>
<div class="t " style="left:810.0px;top:432px;width:300px;text-align:center;line-height:20px;font-size:10.20px;color:#111;direction:rtl;-webkit-text-stroke:0.22px currentColor;">٩</div>
<div class="t " style="left:810.0px;top:452px;width:300px;text-align:center;line-height:20px;font-size:10.20px;color:#111;direction:rtl;-webkit-text-stroke:0.22px currentColor;">١٠</div>
<div class="t " style="left:810.0px;top:472px;width:300px;text-align:center;line-height:20px;font-size:10.20px;color:#111;direction:rtl;-webkit-text-stroke:0.22px currentColor;">١١</div>
<div class="t " style="left:810.0px;top:492px;width:300px;text-align:center;line-height:20px;font-size:10.20px;color:#111;direction:rtl;-webkit-text-stroke:0.22px currentColor;">١٢</div>
<div class="t " style="left:810.0px;top:512px;width:300px;text-align:center;line-height:20px;font-size:10.20px;color:#111;direction:rtl;-webkit-text-stroke:0.22px currentColor;">١٣</div>
<div class="t " style="left:810.0px;top:532px;width:300px;text-align:center;line-height:20px;font-size:10.20px;color:#111;direction:rtl;-webkit-text-stroke:0.22px currentColor;">١٤</div>
<div class="t " style="left:810.0px;top:552px;width:300px;text-align:center;line-height:20px;font-size:10.20px;color:#111;direction:rtl;-webkit-text-stroke:0.22px currentColor;">١٥</div>
<div class="t " style="left:810.0px;top:572px;width:300px;text-align:center;line-height:20px;font-size:10.20px;color:#111;direction:rtl;-webkit-text-stroke:0.22px currentColor;">١٦</div>
<div class="t " style="left:810.0px;top:593px;width:300px;text-align:center;line-height:20px;font-size:10.20px;color:#111;direction:rtl;-webkit-text-stroke:0.22px currentColor;">١٧</div>
<div class="t " style="left:810.0px;top:613px;width:300px;text-align:center;line-height:20px;font-size:10.20px;color:#111;direction:rtl;-webkit-text-stroke:0.22px currentColor;">١٨</div>
<div class="t " style="left:810.0px;top:633px;width:300px;text-align:center;line-height:20px;font-size:10.20px;color:#111;direction:rtl;-webkit-text-stroke:0.22px currentColor;">١٩</div>
<div class="t " style="left:810.0px;top:653px;width:300px;text-align:center;line-height:20px;font-size:10.20px;color:#111;direction:rtl;-webkit-text-stroke:0.22px currentColor;">٢٠</div>
<div class="t " style="left:810.0px;top:673px;width:300px;text-align:center;line-height:20px;font-size:10.20px;color:#111;direction:rtl;-webkit-text-stroke:0.22px currentColor;">٢١</div>
<div class="t " style="left:810.0px;top:693px;width:300px;text-align:center;line-height:20px;font-size:10.20px;color:#111;direction:rtl;-webkit-text-stroke:0.22px currentColor;">٢٢</div>
<div class="t " style="left:810.0px;top:713px;width:300px;text-align:center;line-height:20px;font-size:10.20px;color:#111;direction:rtl;-webkit-text-stroke:0.22px currentColor;">٢٣</div>
<div class="t " style="left:810.0px;top:734px;width:300px;text-align:center;line-height:20px;font-size:10.20px;color:#111;direction:rtl;-webkit-text-stroke:0.22px currentColor;">٢٤</div>
<div class="abs" style="left:904px;top:325.4px;width:42.4px;height:22px;border:2px solid #217346"></div>
<div class="abs" style="left:902px;top:344.6px;width:5.4px;height:5.4px;background:#217346;border:1px solid #fff"></div>

<!-- DIALOG -->
<div id="dlg"><div id="dlgt"></div>
<div class="t" style="left:7.4px;top:7.6px;font-size:11.2px;color:#9b9fa6;direction:ltr;line-height:14px">Microsoft Visual Basic</div>
<div class="t" style="left:11.6px;top:42.2px;font-size:10.4px;color:#000;direction:ltr;line-height:14px;-webkit-text-stroke:0.25px #000">Run-time error '<span style="font-size:9.4px">٩</span>':</div>
<div class="t" style="left:11.6px;top:67.6px;font-size:10.1px;color:#000;direction:ltr;line-height:14px;-webkit-text-stroke:0.25px #000">Subscript out of range</div>
<div class="btn" style="left:10px;background:#cccccc;border-color:#bfbfbf;color:#838383;"><u>C</u>ontinue</div>
<div class="btn" style="left:91px;"><u>E</u>nd</div>
<div class="btn" style="left:171px;"><u>D</u>ebug</div>
<div class="btn" style="left:250px;"><u>H</u>elp</div>
</div>
</body>
</html>
